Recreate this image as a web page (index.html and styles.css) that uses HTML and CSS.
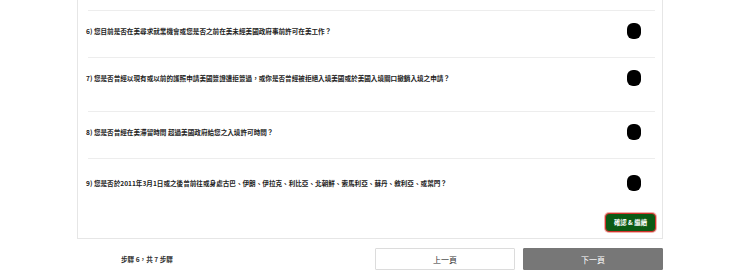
FILE: index.html
```html
<html>
<head>
<meta charset="utf-8">
<link rel="stylesheet" href="styles.css">
</head>
<body>
<div class="page">
  <div class="card">
    <div class="question">
      <p>6) 您目前是否在美尋求就業機會或您是否之前在美未經美國政府事前許可在美工作？</p>
      <span class="toggle"></span>
    </div>
    <div class="question spaced">
      <p>7) 您是否曾經以現有或以前的護照申請美國簽證遭拒簽過，或你是否曾經被拒絕入境美國或於美國入境關口撤銷入境之申請？</p>
      <span class="toggle"></span>
    </div>
    <div class="question">
      <p>8) 您是否曾經在美滯留時間 超過美國政府給您之入境許可時間？</p>
      <span class="toggle"></span>
    </div>
    <div class="question last">
      <p>9) 您是否於2011年3月1日或之後曾前往或身處古巴、伊朗、伊拉克、利比亞、北朝鮮、索馬利亞、蘇丹、敘利亞、或葉門？</p>
      <span class="toggle"></span>
    </div>
    <div class="card-actions">
      <button class="btn-confirm">確認 &amp; 繼續</button>
    </div>
  </div>
  <div class="footer">
    <span class="step">步驟 6，共 7 步驟</span>
    <div class="nav">
      <button class="btn-nav">上一頁</button>
      <button class="btn-nav btn-next">下一頁</button>
    </div>
  </div>
</div>
</body>
</html>
```

FILE: styles.css
```css
body {
  margin: 0;
  font-family: "Noto Sans CJK TC", "Noto Sans", sans-serif;
  color: #222;
  background-color: #fff;
}

.page {
  width: 586px;
  margin-left: 77px;
}

.card {
  border: 1px solid #e6e6e6;
  border-top: 0;
  padding: 10px 7px 6px 10px;
}

.question {
  display: flex;
  align-items: center;
  justify-content: space-between;
  border-top: 1px solid #ededed;
  padding: 12px 14px 18px 0;
}

.question.spaced {
  padding-bottom: 25px;
}

.question.last {
  padding-top: 16px;
  padding-bottom: 0;
}

.question p {
  margin: 0 0 0 -2px;
  font-size: 6.6px;
  font-weight: 700;
  line-height: 16px;
}

.toggle {
  display: block;
  width: 14px;
  height: 16px;
  border-radius: 6px;
  background-color: #000;
}

.card-actions {
  display: flex;
  justify-content: flex-end;
  margin-top: 22px;
  margin-right: -1px;
}

.btn-confirm {
  height: 19px;
  width: 51px;
  padding: 0;
  font-family: inherit;
  font-size: 6.4px;
  font-weight: 700;
  color: #fff;
  background-color: #0b5a14;
  border: 1px solid #d0322c;
  border-radius: 4px;
  box-shadow: 0 0 0 1px #f2b0ab;
}

.footer {
  display: flex;
  align-items: center;
  justify-content: space-between;
  padding: 9px 0 0 44px;
}

.step {
  font-size: 6.6px;
  font-weight: 700;
  color: #333;
}

.nav {
  display: flex;
  gap: 8px;
}

.btn-nav {
  width: 140px;
  height: 22px;
  font-family: inherit;
  font-size: 8px;
  color: #333;
  background-color: #fff;
  border: 1px solid #dcdcdc;
  border-radius: 1px;
}

.btn-next {
  color: #fff;
  background-color: #777;
  border-color: #777;
}
```
